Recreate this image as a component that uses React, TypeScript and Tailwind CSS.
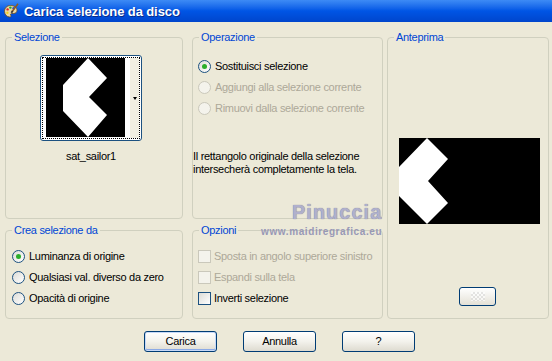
import React from 'react';

type RadioProps = { label: string; checked?: boolean; disabled?: boolean };

const Radio: React.FC<RadioProps> = ({ label, checked, disabled }) => (
    <div className={`flex items-center gap-[4px] h-[21px] ${disabled ? 'text-[#ACA899]' : 'text-black'}`}>
        <span
            className={`w-[13px] h-[13px] rounded-full border flex items-center justify-center ${
                disabled ? 'border-[#CAC8BB] bg-[#F4F3EC]' : 'border-[#1C5180] bg-linear-to-br from-[#DCDCD7] to-white'
            }`}
        >
            {checked && <span className="w-[5px] h-[5px] rounded-full bg-[#2AAE2A]" />}
        </span>
        <span>{label}</span>
    </div>
);

const Check: React.FC<{ label: string; disabled?: boolean }> = ({ label, disabled }) => (
    <div className={`flex items-center gap-[3px] h-[21px] ${disabled ? 'text-[#ACA899]' : 'text-black'}`}>
        <span
            className={`w-[13px] h-[13px] border ${
                disabled ? 'border-[#CAC8BB] bg-[#F4F3EC]' : 'border-[#1C5180] bg-linear-to-br from-[#DCDCD7] to-white'
            }`}
        />
        <span>{label}</span>
    </div>
);

const Group: React.FC<{ title: string; className?: string; children?: React.ReactNode }> = ({ title, className, children }) => (
    <fieldset className={`border border-[#D0D0BF] rounded-[4px] ${className ?? ''}`}>
        <legend className="ml-[6px] px-[2px] text-[#0046D5] leading-[13px]">{title}</legend>
        {children}
    </fieldset>
);

const Button: React.FC<{ label: string; isDefault?: boolean }> = ({ label, isDefault }) => (
    <button
        className={`w-[73px] h-[21px] rounded-[3px] border border-[#003C74] bg-linear-to-b from-white via-[#F3F2EC] to-[#DEDBD0] text-black text-[11px] ${
            isDefault ? 'shadow-[inset_0_0_0_1px_#C7D9F7,inset_0_-1px_0_1px_#8CAAE6]' : ''
        }`}
    >
        {label}
    </button>
);

const AppIcon = () => (
    <svg width="16" height="16" viewBox="0 0 16 16">
        <path
            d="M7.5 2.5C4 2.5 1.5 5 1.5 8.3s2.4 5.7 5.2 5.7c1.4 0 1.5-1 1-1.8-.5-.8 0-1.7 1-1.7h2c1.9 0 3.3-1.3 3.3-3.3 0-2.8-2.9-4.7-6.5-4.7z"
            fill="#EAD9A6"
            stroke="#6B4A1E"
            strokeWidth="0.8"
        />
        <circle cx="4.6" cy="6.4" r="1.2" fill="#E02424" />
        <circle cx="7.4" cy="4.6" r="1.2" fill="#22A83A" />
        <circle cx="10.6" cy="5.2" r="1.2" fill="#2448E0" />
        <circle cx="4.4" cy="9.8" r="1.2" fill="#F2D21E" />
        <path d="M15 0.8 L9.2 8.6" stroke="#8A5A20" strokeWidth="1.6" />
        <path d="M9.6 8 L8.4 9.8" stroke="#333" strokeWidth="1.8" />
    </svg>
);

const App: React.FC = () => {
    return (
        <div className="relative w-[552px] h-[361px] overflow-hidden bg-[#ECE9D8] text-[11px] leading-[13px] tracking-[-0.3px] font-['Liberation_Sans',Arial,sans-serif]">
            {/* title bar */}
            <div className="h-[22px] flex items-center gap-[5px] pl-[3px] bg-linear-to-b from-[#3D8BF5] via-[#0055E5] to-[#0045CC]">
                <AppIcon />
                <span className="text-white font-bold text-[13px] tracking-[-0.1px] [text-shadow:1px_1px_0_#0A2E8A]">
                    Carica selezione da disco
                </span>
            </div>

            <div className="flex pl-[5px] pt-[9px]">
                <div className="flex flex-col w-[178px] gap-[5px]">
                    <Group title="Selezione" className="h-[188px]">
                        <div className="ml-[34px] mt-[11px] w-[102px] h-[86px] rounded-[3px] border border-[#1C5180] bg-white p-[1px]">
                            <div className="h-full flex border border-dotted border-black">
                                <div className="ml-[3px] w-[79px] h-[79px] bg-black">
                                    <svg width="79" height="79" viewBox="0 0 79 79">
                                        <polygon points="42,0 61,20 43,39 61,57 42,79 17,53 17,27" fill="#fff" />
                                    </svg>
                                </div>
                                <div className="w-[5px] bg-white" />
                                <div className="flex-1 flex items-center justify-center bg-[#F1EFE2]">
                                    <span className="w-0 h-0 border-x-[2px] border-t-[3px] border-x-transparent border-t-black" />
                                </div>
                            </div>
                        </div>
                        <div className="ml-[34px] mt-[9px] w-[102px] text-center">sat_sailor1</div>
                    </Group>
                    <Group title="Crea selezione da" className="h-[95px]">
                        <div className="pl-[6px] mt-[9px]">
                            <Radio label="Luminanza di origine" checked />
                            <Radio label="Qualsiasi val. diverso da zero" />
                            <Radio label="Opacità di origine" />
                        </div>
                    </Group>
                </div>

                <div className="flex flex-col w-[191px] ml-[9px] gap-[5px]">
                    <Group title="Operazione" className="h-[188px]">
                        <div className="pl-[5px] mt-[12px]">
                            <Radio label="Sostituisci selezione" checked />
                            <Radio label="Aggiungi alla selezione corrente" disabled />
                            <Radio label="Rimuovi dalla selezione corrente" disabled />
                        </div>
                        <p className="mt-[31px]">
                            Il rettangolo originale della selezione
                            <br />
                            intersecherà completamente la tela.
                        </p>
                    </Group>
                    <Group title="Opzioni" className="h-[95px]">
                        <div className="pl-[5px] mt-[9px]">
                            <Check label="Sposta in angolo superiore sinistro" disabled />
                            <Check label="Espandi sulla tela" disabled />
                            <Check label="Inverti selezione" />
                        </div>
                    </Group>
                </div>

                <Group title="Anteprima" className="w-[162px] ml-[4px] h-[288px]">
                    <div className="ml-[11px] mt-[94px] w-[141px] h-[86px] bg-black">
                        <svg width="141" height="86" viewBox="0 0 141 86">
                            <polygon points="28,0 49,21 29,43 49,65 28,86 0,58 0,29" fill="#fff" />
                        </svg>
                    </div>
                    <button className="ml-[71px] mt-[63px] w-[37px] h-[19px] rounded-[3px] border border-[#003C74] bg-linear-to-b from-white to-[#E4E1D6] flex items-center justify-center">
                        <span className="w-[14px] h-[9px] opacity-60 bg-[conic-gradient(#d8d8d8_25%,#fff_0_50%,#d8d8d8_0_75%,#fff_0)] bg-[length:4px_4px]" />
                    </button>
                </Group>
            </div>

            <div className="flex gap-[26px] pl-[144px] mt-[12px]">
                <Button label="Carica" isDefault />
                <Button label="Annulla" />
                <Button label="?" />
            </div>

            {/* watermark */}
            <span className="absolute left-[292px] top-[201px] text-[20px] leading-[22px] font-bold tracking-[1px] text-[#B0B0CC] [text-shadow:0_0_1px_#6A6A8C]">
                Pinuccia
            </span>
            <span className="absolute left-[261px] top-[226px] text-[10px] leading-[12px] font-bold tracking-[0.6px] text-[#9898B6]">
                www.maidiregrafica.eu
            </span>
        </div>
    );
};

export default App;
